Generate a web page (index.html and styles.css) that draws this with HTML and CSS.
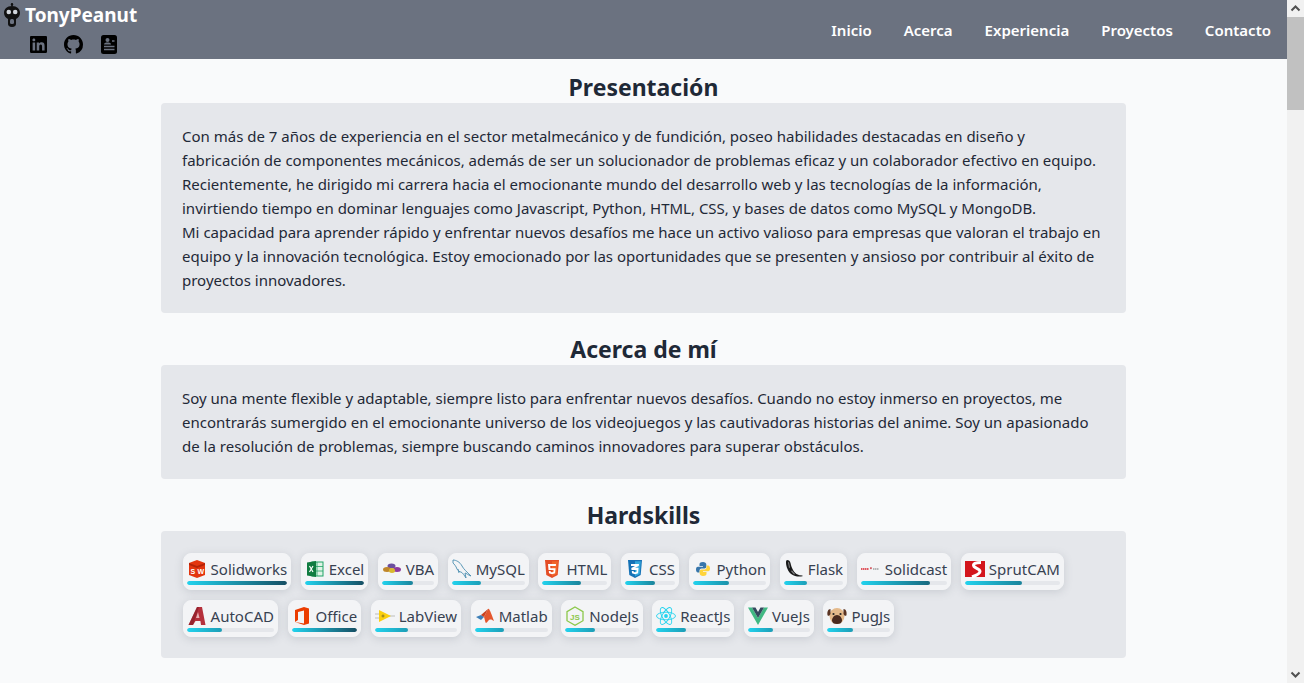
FILE: index.html
```html
<!DOCTYPE html>
<html lang="es">
<head>
<meta charset="utf-8">
<title>TonyPeanut</title>
<link rel="stylesheet" href="styles.css">
</head>
<body>
<div class="page">
  <header class="topbar">
    <div class="brand">
      <div class="brand-row">
        <svg class="logo" viewBox="0 0 18 24"><path d="M9 0v3" stroke="#111" stroke-width="1.4"/><circle cx="9" cy="1.5" r="1.2" fill="#111"/><path fill="#111" d="M9 3C4 3 1 6 1 10c0 3 2 5 4 6v5c0 1.5 1 3 4 3s4-1.500 4-3v-5c2-1 4-3 4-6 0-4-3-7-8-7z"/><circle cx="5.800" cy="9" r="2.300" fill="#d1d5db"/><circle cx="12.200" cy="9" r="2.300" fill="#d1d5db"/><rect x="7" y="16" width="4" height="5" rx="1.500" fill="#6b7280"/></svg>
        <span class="brand-name">TonyPeanut</span>
      </div>
      <div class="socials">
        <svg class="social in" viewBox="0 32 448 448"><path d="M416 32H31.900C14.300 32 0 46.500 0 64.300v383.400C0 465.500 14.300 480 31.900 480H416c17.600 0 32-14.500 32-32.300V64.300c0-17.800-14.400-32.300-32-32.300zM135.400 416H69V202.200h66.500V416zm-33.200-243c-21.300 0-38.500-17.300-38.500-38.500S80.900 96 102.200 96c21.200 0 38.500 17.300 38.500 38.500 0 21.300-17.200 38.500-38.500 38.500zm282.100 243h-66.400V312c0-24.800-.5-56.700-34.500-56.700-34.600 0-39.900 27-39.900 54.900V416h-66.400V202.200h63.700v29.200h.9c8.900-16.800 30.600-34.500 62.900-34.500 67.200 0 79.700 44.300 79.700 101.900V416z"/></svg>
        <svg class="social gh" viewBox="0 0 16 16"><path d="M8 0C3.580 0 0 3.580 0 8c0 3.540 2.290 6.530 5.470 7.590.4.070.55-.17.55-.38 0-.19-.01-.82-.01-1.490-2.010.37-2.530-.49-2.690-.94-.09-.23-.48-.94-.82-1.130-.28-.15-.68-.52-.01-.53.63-.01 1.080.58 1.230.82.720 1.210 1.870.87 2.330.66.070-.52.28-.87.51-1.070-1.780-.2-3.640-.89-3.640-3.950 0-.87.31-1.590.82-2.150-.08-.2-.36-1.020.08-2.120 0 0 .67-.21 2.200.82.64-.18 1.320-.27 2-.27.68 0 1.360.09 2 .27 1.530-1.040 2.200-.82 2.200-.82.44 1.100.16 1.920.08 2.120.51.56.82 1.270.82 2.150 0 3.070-1.870 3.750-3.650 3.950.29.25.54.73.54 1.480 0 1.070-.01 1.930-.01 2.200 0 .21.15.46.55.38A8.013 8.013 0 0016 8c0-4.420-3.580-8-8-8z"/></svg>
        <svg class="social cv" viewBox="0 0 16 19"><rect width="16" height="19" rx="2.500"/><circle cx="6.500" cy="5" r="2" fill="#6b7280"/><path d="M3 9.500c0-1.500 1.500-2 3.500-2s3.500.5 3.500 2z" fill="#6b7280"/><path d="M11 6h2.500M3 11.500h10.500M3 14.500h10.500" stroke="#6b7280" stroke-width="1.300"/></svg>
      </div>
    </div>
    <nav class="nav">
      <a>Inicio</a><a>Acerca</a><a>Experiencia</a><a>Proyectos</a><a>Contacto</a>
    </nav>
  </header>
  <main class="content">
    <h2 class="title first">Presentación</h2>
    <section class="card">
      <p>Con más de 7 años de experiencia en el sector metalmecánico y de fundición, poseo habilidades destacadas en diseño y fabricación de componentes mecánicos, además de ser un solucionador de problemas eficaz y un colaborador efectivo en equipo. Recientemente, he dirigido mi carrera hacia el emocionante mundo del desarrollo web y las tecnologías de la información, invirtiendo tiempo en dominar lenguajes como Javascript, Python, HTML, CSS, y bases de datos como MySQL y MongoDB.</p>
      <p>Mi capacidad para aprender rápido y enfrentar nuevos desafíos me hace un activo valioso para empresas que valoran el trabajo en equipo y la innovación tecnológica. Estoy emocionado por las oportunidades que se presenten y ansioso por contribuir al éxito de proyectos innovadores.</p>
    </section>
    <h2 class="title">Acerca de mí</h2>
    <section class="card">
      <p>Soy una mente flexible y adaptable, siempre listo para enfrentar nuevos desafíos. Cuando no estoy inmerso en proyectos, me encontrarás sumergido en el emocionante universo de los videojuegos y las cautivadoras historias del anime. Soy un apasionado de la resolución de problemas, siempre buscando caminos innovadores para superar obstáculos.</p>
    </section>
    <h2 class="title">Hardskills</h2>
    <section class="card skills">
      <div class="chip"><div class="chip-row"><svg class="ico" viewBox="0 0 20 20"><path fill="#e3350f" d="M10 1l8 3v12l-8 3-8-3V4z"/><path fill="#b32208" d="M2 4l8 3 8-3v2l-8 3-8-3z"/><text x="3.500" y="15" class="ico-t">S</text><text x="10.500" y="15" class="ico-t">W</text></svg><span>Solidworks</span></div><div class="track"><div class="fill" style="--p:100"></div></div></div>
      <div class="chip"><div class="chip-row"><svg class="ico" viewBox="0 0 20 20"><rect x="7" y="3" width="11" height="14" fill="#dff3e6" stroke="#21a366"/><path d="M12 3v14M7 7.500h11M7 12h11" stroke="#21a366" stroke-width=".8"/><path fill="#107c41" d="M2 3.500l9-1.500v16l-9-1.500z"/><path d="M4.500 7l3.500 6M8 7l-3.500 6" stroke="#fff" stroke-width="1.200"/></svg><span>Excel</span></div><div class="track"><div class="fill" style="--p:100"></div></div></div>
      <div class="chip"><div class="chip-row"><svg class="ico" viewBox="0 0 20 20"><ellipse cx="9.500" cy="7" rx="4" ry="2.500" fill="#6b4e9e"/><ellipse cx="5" cy="10.500" rx="4" ry="2.500" fill="#c0862a"/><ellipse cx="15" cy="10.500" rx="4" ry="2.500" fill="#8e3a9d"/><ellipse cx="10" cy="11.500" rx="3" ry="2.500" fill="#d9b82e"/></svg><span>VBA</span></div><div class="track"><div class="fill" style="--p:59"></div></div></div>
      <div class="chip"><div class="chip-row"><svg class="ico" viewBox="0 0 20 20"><path fill="none" stroke="#4a8db0" stroke-width=".9" d="M1 1c3 0 7 2 9 6 1.500 3 5 6 9 10-3-1-5-3-6-3l1 5c-2-3-3-5-5-6-1 0-3-1-4-3C4 7 2 5 1 4zM6 10l1 4"/></svg><span>MySQL</span></div><div class="track"><div class="fill" style="--p:40"></div></div></div>
      <div class="chip"><div class="chip-row"><svg class="ico" viewBox="0 0 20 20"><path fill="#e44d26" d="M3 1h14l-1.300 15L10 19l-5.700-3z"/><path fill="#f16529" d="M10 2.200h5.800l-1 12.800-4.800 2.500z"/><path fill="#fff" d="M6 5h8l-.2 2H8.200l.2 2.200h5.200l-.5 5L10 15.200l-3-1-.2-2.300h1.800l.1 1 1.300.4 1.400-.4.200-1.800H6.500z"/></svg><span>HTML</span></div><div class="track"><div class="fill" style="--p:59"></div></div></div>
      <div class="chip"><div class="chip-row"><svg class="ico" viewBox="0 0 20 20"><path fill="#1572b6" d="M3 1h14l-1.300 15L10 19l-5.700-3z"/><path fill="#33a9dc" d="M10 2.200h5.800l-1 12.800-4.800 2.500z"/><path fill="#fff" d="M6 5h8l-.2 2-3.800 1.700h3.600l-.5 5.500L10 15.200l-3-1-.2-2.300h1.800l.1 1 1.300.4 1.400-.4.200-1.800H6.500l-.2-2L10 7H6z"/></svg><span>CSS</span></div><div class="track"><div class="fill" style="--p:60"></div></div></div>
      <div class="chip"><div class="chip-row"><svg class="ico" viewBox="0 0 20 20"><path fill="#3776ab" d="M10 3C7 3 6.500 4 6.500 5.500V7H10v.7H5C3.500 7.700 3 9 3 10.500s.5 3 2 3h1.500V11.500c0-1.200 1-2 2-2h3c1 0 1.800-.8 1.800-2V5.500C13.300 4 12 3 10 3z"/><path fill="#ffd43b" d="M10 17c3 0 3.500-1 3.500-2.500V13H10v-.7h5c1.500 0 2-1.300 2-2.800s-.5-3-2-3h-1.500v2c0 1.200-1 2-2 2h-3c-1 0-1.800.8-1.800 2v2c0 1.500 1.300 2.500 3.300 2.500z"/></svg><span>Python</span></div><div class="track"><div class="fill" style="--p:50"></div></div></div>
      <div class="chip"><div class="chip-row"><svg class="ico" viewBox="0 0 20 20"><path fill="#1a1a1a" d="M3 1c2 0 3 1 3.500 3 .8 4 3 9 6 11 2 1 4 1.500 6 1.500v.8c-4 .7-8 .2-11-2C4 13 2 7 2 3.500 2 2.500 2 1.500 3 1z"/><path fill="#888" d="M4 3l1 .5 1 5-1 .5zM7 12l1-.5 3 3.500-1 .5z"/></svg><span>Flask</span></div><div class="track"><div class="fill" style="--p:39"></div></div></div>
      <div class="chip"><div class="chip-row"><svg class="ico" viewBox="0 0 20 20"><path d="M0 10h8" stroke="#d9232e" stroke-width="1.600" stroke-dasharray="1.500 .5"/><path d="M9 9l1-1 .8 1-.8 1.600z" fill="#c0141e"/><path d="M12 10h6" stroke="#777" stroke-width="1.200" stroke-dasharray="1.500 .5"/></svg><span>Solidcast</span></div><div class="track"><div class="fill" style="--p:80"></div></div></div>
      <div class="chip"><div class="chip-row"><svg class="ico" viewBox="0 0 20 20"><rect y="2" width="20" height="16" fill="#d3151c"/><path fill="none" stroke="#fff" stroke-width="3" d="M16 3.500c-5 0-9 1-7 4 1.500 2 6 2 6 5 0 2.500-4 4-8 5.500"/></svg><span>SprutCAM</span></div><div class="track"><div class="fill" style="--p:60"></div></div></div>
      <div class="chip"><div class="chip-row"><svg class="ico" viewBox="0 0 20 20"><path fill="#b5303b" d="M10 1h5l3.500 18H14l-.6-4H8.500L6 19H1.500z"/><path fill="#e8b0b4" d="M11 6l-2 6h3.500z"/><path fill="#7e1a24" d="M10 1h2L6 19H1.500z" opacity=".55"/></svg><span>AutoCAD</span></div><div class="track"><div class="fill" style="--p:40"></div></div></div>
      <div class="chip"><div class="chip-row"><svg class="ico" viewBox="0 0 20 20"><path fill="#eb3c00" d="M3 4l9-3 5 1.500v15L12 19l-9-3 9 1.500V4.500L6 6v8l-3 2z"/></svg><span>Office</span></div><div class="track"><div class="fill" style="--p:100"></div></div></div>
      <div class="chip"><div class="chip-row"><svg class="ico" viewBox="0 0 20 20"><path d="M0 8h6M0 12h6M14 10h6" stroke="#cfcfcf" stroke-width="1.500"/><path fill="#fbcf0f" d="M4 4l12 6-12 6z"/><path d="M6.500 10h3M8 8.500v3" stroke="#8a7a20"/></svg><span>LabView</span></div><div class="track"><div class="fill" style="--p:40"></div></div></div>
      <div class="chip"><div class="chip-row"><svg class="ico" viewBox="0 0 20 20"><path fill="#3d7fb8" d="M1 11l5-2 3 2-3 3z"/><path fill="#e4572e" d="M9 11l4-8c1-1 2 1 6 12-2-1-3-2-5-1-1 .5-2 3-3 3-.5 0-1-3-2-6z"/><path fill="#c9401f" d="M6 9l7-6-4 8z"/></svg><span>Matlab</span></div><div class="track"><div class="fill" style="--p:40"></div></div></div>
      <div class="chip"><div class="chip-row"><svg class="ico" viewBox="0 0 20 20"><path fill="none" stroke="#8cc84b" stroke-width="1.300" d="M10 1l8 4.700v9L10 19.300 2 14.700v-9z"/><text x="5" y="13.500" class="ico-j">JS</text></svg><span>NodeJs</span></div><div class="track"><div class="fill" style="--p:41"></div></div></div>
      <div class="chip"><div class="chip-row"><svg class="ico" viewBox="0 0 20 20"><g fill="none" stroke="#22d3ee" stroke-width=".9"><ellipse cx="10" cy="10" rx="9.500" ry="3.800"/><ellipse cx="10" cy="10" rx="9.500" ry="3.800" transform="rotate(60 10 10)"/><ellipse cx="10" cy="10" rx="9.500" ry="3.800" transform="rotate(120 10 10)"/></g><circle cx="10" cy="10" r="1.900" fill="#22d3ee"/></svg><span>ReactJs</span></div><div class="track"><div class="fill" style="--p:40"></div></div></div>
      <div class="chip"><div class="chip-row"><svg class="ico" viewBox="0 0 20 20"><path fill="#41b883" d="M0 1.500h4L10 12l6-10.500h4L10 19z"/><path fill="#34495e" d="M4 1.500h3.500L10 6l2.500-4.500H16L10 12z"/></svg><span>VueJs</span></div><div class="track"><div class="fill" style="--p:40"></div></div></div>
      <div class="chip"><div class="chip-row"><svg class="ico" viewBox="0 0 20 20"><ellipse cx="10" cy="10" rx="7.500" ry="8" fill="#e4b98a"/><path fill="#5a3423" d="M3.500 3C1 3 0 6 .5 9c.5 1.500 2 1 3-1zM16.500 3c2.500 0 3.500 3 3 6-.5 1.500-2 1-3-1z"/><path fill="#4a2a1e" d="M10 9c-3 0-5 3-5 5.500S7 18 10 18s5-1 5-3.500S13 9 10 9z"/><circle cx="6.500" cy="8" r="1.100" fill="#222"/><circle cx="13.500" cy="8" r="1.100" fill="#222"/></svg><span>PugJs</span></div><div class="track"><div class="fill" style="--p:40"></div></div></div>
    </section>
  </main>
  <aside class="scrollbar" aria-hidden="true">
    <svg class="arrow" viewBox="0 0 17 17"><path d="M4.500 10.500l4-4 4 4" fill="none" stroke="#505050" stroke-width="2"/></svg>
    <div class="thumb"></div>
    <div class="rail"></div>
    <svg class="arrow" viewBox="0 0 17 17"><path d="M4.500 6.500l4 4 4-4" fill="none" stroke="#505050" stroke-width="2"/></svg>
  </aside>
</div>
</body>
</html>
```

FILE: styles.css
```css
* { box-sizing: border-box; }
html, body { margin: 0; height: 100%; overflow: hidden; }
body {
  background: #f9fafb;
  color: #1f2937;
  font-family: "Noto Sans", "Open Sans", sans-serif;
  font-size: 15px;
  line-height: 24px;
}
.page {
  display: grid;
  grid-template-columns: 1287px 17px;
  grid-template-rows: 59px 624px;
  height: 683px;
}
.topbar {
  grid-column: 1;
  grid-row: 1;
  background: #6b7280;
  display: flex;
  justify-content: space-between;
  align-items: center;
  padding: 0 16px 0 3px;
}
.brand { display: flex; flex-direction: column; height: 100%; }
.brand-row { display: flex; align-items: center; gap: 4px; height: 33px; padding-bottom: 3px; }
.logo { width: 18px; height: 24px; }
.brand-name { color: #fff; font-weight: 700; font-size: 19px; }
.socials { display: flex; align-items: center; padding-left: 27px; height: 20px; margin-top: 1px; }
.social { fill: #000; display: block; }
.in { width: 17px; height: 17px; }
.gh { width: 19px; height: 19px; margin-left: 17px; }
.cv { width: 16px; height: 19px; margin-left: 18px; }
.nav { display: flex; gap: 32px; }
.nav a { color: #fff; font-weight: 600; }
.scrollbar {
  grid-column: 2;
  grid-row: 1 / 3;
  background: #f1f1f1;
  display: flex;
  flex-direction: column;
}
.arrow { width: 17px; height: 17px; flex: none; display: block; }
.thumb { height: 93px; background: #c1c1c1; flex: none; }
.rail { flex: 1; }
.content { grid-column: 1; grid-row: 2; padding: 0 161px; }
.title {
  margin: 20px 0 0;
  font-size: 23px;
  line-height: 32px;
  font-weight: 700;
  text-align: center;
  color: #1f2937;
}
.title.first { margin-top: 12px; }
.card {
  background: #e5e7eb;
  border-radius: 4px;
  padding: 21px;
}
.card p { margin: 0; }
.skills {
  display: flex;
  flex-wrap: wrap;
  gap: 9.6px;
  padding: 22px 21px 21px 21.6px;
}
.chip {
  background: #f3f4f6;
  border: 1px solid #f3f4f6;
  border-radius: 8px;
  padding: 3px 3px 4px;
  box-shadow: 0 2px 8px rgba(107, 114, 128, .22);
  height: 37px;
}
.chip-row { display: flex; align-items: center; gap: 4px; height: 24px; color: #374151; }
.ico { width: 20px; height: 20px; flex: none; }
.ico-t { font: 700 7px "Liberation Sans", sans-serif; fill: #fff; }
.ico-j { font: 700 8px "Liberation Sans", sans-serif; fill: #8cc84b; }
.track { height: 4px; background: #e5e7eb; border-radius: 2px; overflow: hidden; }
.fill {
  width: calc(var(--p) * 1%);
  height: 100%;
  overflow: hidden;
  border-radius: 2px;
}
.fill::before {
  content: "";
  display: block;
  height: 100%;
  width: calc(10000% / var(--p));
  background: linear-gradient(90deg, #22d3ee, #164e63);
}
```
